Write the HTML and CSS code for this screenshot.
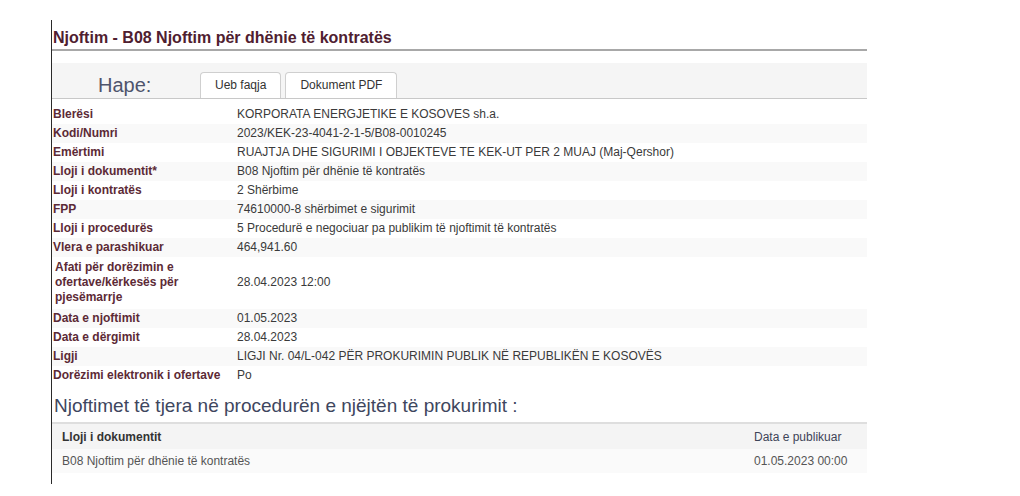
FILE: index.html
```html
<!DOCTYPE html>
<html>
<head>
	<meta charset="utf-8">
	<title>Njoftim - B08</title>
	<link rel="stylesheet" href="styles.css">
</head>
<body>
	<div class="page">
		<h1 class="title">Njoftim - B08 Njoftim për dhënie të kontratës</h1>
		<div class="open-bar">
			<span class="open-label">Hape:</span>
			<a class="tab">Ueb faqja</a>
			<a class="tab">Dokument PDF</a>
		</div>
		<table class="details">
			<tr><td class="label">Blerësi</td><td>KORPORATA ENERGJETIKE E KOSOVES sh.a.</td></tr>
			<tr><td class="label">Kodi/Numri</td><td>2023/KEK-23-4041-2-1-5/B08-0010245</td></tr>
			<tr><td class="label">Emërtimi</td><td>RUAJTJA DHE SIGURIMI I OBJEKTEVE TE KEK-UT PER 2 MUAJ (Maj-Qershor)</td></tr>
			<tr><td class="label">Lloji i dokumentit*</td><td>B08 Njoftim për dhënie të kontratës</td></tr>
			<tr><td class="label">Lloji i kontratës</td><td>2 Shërbime</td></tr>
			<tr><td class="label">FPP</td><td>74610000-8 shërbimet e sigurimit</td></tr>
			<tr><td class="label">Lloji i procedurës</td><td>5 Procedurë e negociuar pa publikim të njoftimit të kontratës</td></tr>
			<tr><td class="label">Vlera e parashikuar</td><td>464,941.60</td></tr>
			<tr class="tall"><td class="label">Afati për dorëzimin e ofertave/kërkesës për pjesëmarrje</td><td>28.04.2023 12:00</td></tr>
			<tr><td class="label">Data e njoftimit</td><td>01.05.2023</td></tr>
			<tr><td class="label">Data e dërgimit</td><td>28.04.2023</td></tr>
			<tr><td class="label">Ligji</td><td>LIGJI Nr. 04/L-042 PËR PROKURIMIN PUBLIK NË REPUBLIKËN E KOSOVËS</td></tr>
			<tr><td class="label">Dorëzimi elektronik i ofertave</td><td>Po</td></tr>
		</table>
		<h2 class="related-title">Njoftimet të tjera në procedurën e njëjtën të prokurimit :</h2>
		<table class="related">
			<tr class="related-head">
				<th>Lloji i dokumentit</th>
				<td class="date">Data e publikuar</td>
			</tr>
			<tr class="related-row">
				<td>B08 Njoftim për dhënie të kontratës</td>
				<td class="date">01.05.2023 00:00</td>
			</tr>
		</table>
	</div>
</body>
</html>
```

FILE: styles.css
```css
body {
	margin: 0;
	background: #fff;
	font-family: "Liberation Sans", Arial, sans-serif;
	font-size: 12px;
	color: #333;
}

.page {
	margin: 20px 0 0 51px;
	width: 815px;
	padding-bottom: 11px;
	border-left: 1px solid #2a2a2a;
}

.title {
	margin: 0;
	padding: 8px 0 2px 1px;
	line-height: 19px;
	font-size: 16px;
	font-weight: bold;
	color: #4f2030;
	border-bottom: 2px solid #a8a8a8;
}

.open-bar {
	margin-top: 12px;
	height: 35px;
	display: flex;
	align-items: flex-end;
	background-color: #f5f5f5;
	border-bottom: 1px solid #c8c8c8;
}
.open-label {
	width: 102px;
	padding-left: 46px;
	line-height: 25px;
	font-size: 20px;
	color: #4e546c;
}
.tab {
	height: 25px;
	line-height: 25px;
	padding: 0 14px;
	margin-right: 4px;
	background-color: #fff;
	border: 1px solid #cfcfcf;
	border-bottom: none;
	border-radius: 4px 4px 0 0;
	color: #333;
}

.details {
	margin-top: 6px;
	width: 100%;
	border-collapse: collapse;
}
.details td {
	padding: 2px 3px;
	line-height: 15px;
	vertical-align: middle;
	color: #3a3a3a;
}
.details tr:nth-child(even) {
	background-color: #f9f9f9;
}
.details .tall td {
	padding: 3px 3px 4px;
}
.details .label {
	width: 176px;
	padding-left: 1px;
	font-weight: bold;
	color: #5c2a36;
}

.related-title {
	margin: 9px 0 5px 2px;
	line-height: 23px;
	font-size: 19px;
	font-weight: normal;
	color: #3e465e;
}

.related {
	width: 100%;
	border-collapse: collapse;
	border-top: 2px solid #dedede;
}
.related th,
.related td {
	padding: 0 10px;
	text-align: left;
}
.related-head {
	height: 26px;
	background-color: #f4f4f4;
}
.related-head th {
	font-weight: bold;
	color: #333;
}
.related-head .date {
	color: #3e4458;
}
.related-row {
	height: 24px;
	background-color: #fafafa;
	color: #555;
}
.related .date {
	width: 103px;
}
```
